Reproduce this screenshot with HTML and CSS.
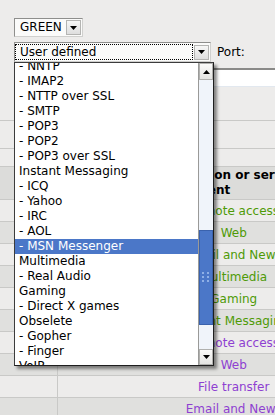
FILE: index.html
```html
<!DOCTYPE html>
<html>
<head>
<meta charset="utf-8">
<link rel="stylesheet" href="styles.css">
</head>
<body>
<div class="controls">
  <div class="combo combo-green">
    <span class="combo-text">GREEN</span>
    <span class="combo-btn"><svg width="7" height="4" viewBox="0 0 7 4"><path d="M0 0H7L3.5 4Z" fill="#000"/></svg></span>
  </div>
  <div class="row2">
    <div class="combo combo-user">
      <span class="combo-text focus">User defined</span>
      <span class="combo-btn"><svg width="7" height="4" viewBox="0 0 7 4"><path d="M0 0H7L3.5 4Z" fill="#000"/></svg></span>
    </div>
    <span class="port">Port:</span>
  </div>
</div>
<div class="field"></div>
<table class="rules">
  <colgroup><col class="c1"><col class="c2"></colgroup>
  <tr class="r-top"><td></td><td></td></tr>
  <tr class="r-mid"><td></td><td></td></tr>
  <tr class="r-head"><th></th><th class="head-text">Application or service<br>component</th></tr>
  <tr class="odd"><td></td><td class="green">Remote access</td></tr>
  <tr class="even"><td></td><td class="green">Web</td></tr>
  <tr class="odd"><td></td><td class="green">Email and News</td></tr>
  <tr class="even"><td></td><td class="green">Multimedia</td></tr>
  <tr class="odd"><td></td><td class="green">Gaming</td></tr>
  <tr class="even"><td></td><td class="green">Instant Messaging</td></tr>
  <tr class="odd"><td></td><td class="purple">Remote access</td></tr>
  <tr class="even"><td></td><td class="purple">Web</td></tr>
  <tr class="odd"><td></td><td class="purple">File transfer</td></tr>
  <tr class="even"><td></td><td class="purple">Email and News</td></tr>
</table>
<div class="popup">
  <div class="list">
    <div class="items">
      <div class="item">- NNTP</div>
      <div class="item">- IMAP2</div>
      <div class="item">- NTTP over SSL</div>
      <div class="item">- SMTP</div>
      <div class="item">- POP3</div>
      <div class="item">- POP2</div>
      <div class="item">- POP3 over SSL</div>
      <div class="item">Instant Messaging</div>
      <div class="item">- ICQ</div>
      <div class="item">- Yahoo</div>
      <div class="item">- IRC</div>
      <div class="item">- AOL</div>
      <div class="item selected">- MSN Messenger</div>
      <div class="item">Multimedia</div>
      <div class="item">- Real Audio</div>
      <div class="item">Gaming</div>
      <div class="item">- Direct X games</div>
      <div class="item">Obselete</div>
      <div class="item">- Gopher</div>
      <div class="item">- Finger</div>
      <div class="item">VoIP</div>
    </div>
  </div>
  <div class="scrollbar">
    <div class="sb-btn sb-up"><svg width="7" height="4" viewBox="0 0 7 4"><path d="M0 4H7L3.5 0Z" fill="#000"/></svg></div>
    <div class="sb-track">
      <div class="sb-thumb">
        <svg width="8" height="11" viewBox="0 0 8 11"><g fill="#8fb0e6"><rect x="0" y="0" width="2" height="2"/><rect x="5" y="0" width="2" height="2"/><rect x="0" y="4" width="2" height="2"/><rect x="5" y="4" width="2" height="2"/><rect x="0" y="8" width="2" height="2"/><rect x="5" y="8" width="2" height="2"/></g></svg>
      </div>
    </div>
    <div class="sb-btn sb-down"><svg width="7" height="4" viewBox="0 0 7 4"><path d="M0 0H7L3.5 4Z" fill="#000"/></svg></div>
  </div>
</div>
</body>
</html>
```
FILE: styles.css
```css
* { box-sizing: border-box; }
html, body { margin: 0; padding: 0; }
body {
  width: 275px;
  height: 415px;
  overflow: hidden;
  position: relative;
  background: #edeceb;
  font-family: "DejaVu Sans", sans-serif;
  font-size: 12px;
  color: #000;
}
.controls {
  padding: 18px 0 0 14px;
  height: 62px;
}
.combo {
  display: flex;
  align-items: center;
  background: #fbfbfa;
  border: 1px solid #8e8e8c;
  border-right-color: #d0d0ce;
  border-bottom-color: #d0d0ce;
}
.combo-green { width: 69px; height: 19px; }
.combo-text {
  flex: 1;
  padding-left: 5px;
  line-height: 15px;
  white-space: nowrap;
}
.combo-btn {
  width: 15px;
  height: 15px;
  margin-right: 1px;
  display: flex;
  align-items: center;
  justify-content: center;
  background: linear-gradient(#f7f7f6, #dedede);
  border: 1px solid #b4b4b2;
}
.row2 {
  display: flex;
  align-items: center;
  margin-top: 5px;
}
.combo-user { width: 197px; height: 20px; }
.combo-user .combo-text {
  align-self: stretch;
  margin: 1px 1px 1px 0;
  outline: 1px dotted #000;
  outline-offset: -1px;
  line-height: 16px;
  padding-left: 5px;
}
.port { margin-left: 6px; }
.field {
  margin-top: 6px;
  margin-left: 14px;
  height: 19px;
  background: #fff;
  border-top: 2px solid #8a8a88;
  border-bottom: 1px solid #e2e8ef;
}
.rules {
  margin-top: 33px;
  border-collapse: collapse;
  table-layout: fixed;
  width: 410px;
}
.c1 { width: 57px; }
.rules td, .rules th {
  padding: 0;
  border-top: 1px solid #c9c9c7;
}
.rules td:first-child, .rules th:first-child { border-right: 1px solid #c9c9c7; }
.r-top td { height: 28px; }
.r-mid td { height: 18px; }
.r-head th { height: 33px; background: #dcdcda; font-weight: bold; text-align: left; }
.head-text { padding-left: 97px !important; line-height: 15px; }
.odd td, .even td { height: 22px; text-align: center; }
.even td { background: #e0e0de; }
.odd td { background: #edeceb; }
.green { color: #4e9a06; }
.purple { color: #8e3fd1; }
.popup {
  position: absolute;
  left: 14px;
  top: 62px;
  width: 200px;
  height: 304px;
  background: #fff;
  border: 1px solid #3c3c3c;
  border-right-color: #1e1e1e;
  border-bottom-color: #1e1e1e;
  display: flex;
  box-shadow: 3px 3px 3px rgba(0,0,0,0.45);
}
.list {
  flex: 1;
  overflow: hidden;
}
.items { margin-top: -4px; }
.item {
  height: 15px;
  line-height: 15px;
  padding-left: 4px;
  white-space: nowrap;
}
.item.selected { background: #4b77c8; color: #fff; }
.scrollbar {
  width: 15px;
  display: flex;
  flex-direction: column;
  border-left: 1px solid #9a9a98;
}
.sb-btn {
  display: flex;
  align-items: center;
  justify-content: center;
  background: linear-gradient(#fafaf9, #e4e4e2);
  border: 1px solid #b0b0ae;
}
.sb-up { height: 17px; }
.sb-down { height: 16px; }
.sb-track {
  flex: 1;
  background: #f0f4fa;
}
.sb-thumb {
  margin-top: 150px;
  height: 95px;
  background: #4b77c8;
  border: 1px solid #3a62ad;
  display: flex;
  align-items: center;
  justify-content: center;
}
```
